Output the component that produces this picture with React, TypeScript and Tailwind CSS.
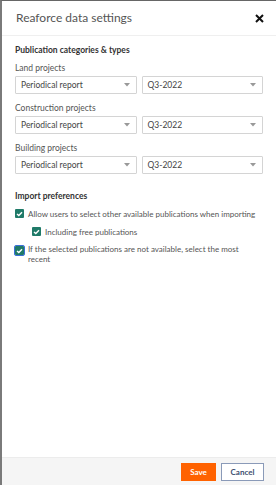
import React from "react";

const font = { fontFamily: "Lato, 'Noto Sans', sans-serif" };

function Select({ value }: { value: string }) {
  return (
    <div className="flex-1 h-[18px] border border-[#d4d4d4] rounded-[1px] flex items-center justify-between pl-[5px] pr-[6px] bg-white">
      <span className="text-[8.5px] text-[#444]">{value}</span>
      <svg width="6" height="4" viewBox="0 0 6 4"><path d="M0 0 L6 0 L3 3.5 Z" fill="#999" /></svg>
    </div>
  );
}

function Row({ label }: { label: string }) {
  return (
    <div className="flex flex-col">
      <div className="text-[8.5px] leading-[11px] text-[#555] mb-[2px]">{label}</div>
      <div className="flex gap-[5px]">
        <Select value="Periodical report" />
        <Select value="Q3-2022" />
      </div>
    </div>
  );
}

function Check({ focus }: { focus?: boolean }) {
  const box = (
    <div className="w-[9px] h-[9px] bg-[#1f7a68] rounded-[1px] flex items-center justify-center shrink-0">
      <svg width="7" height="6" viewBox="0 0 7 6"><path d="M1 3 L2.8 4.6 L6 1.2" stroke="white" strokeWidth="1.4" fill="none" /></svg>
    </div>
  );
  if (focus)
    return (
      <div className="w-[11px] h-[11px] rounded-[2px] border border-[#3b6fd8] bg-[#e8eefc] flex items-center justify-center shrink-0 -ml-[1px] mt-[1px]">
        {box}
      </div>
    );
  return box;
}

export default function App() {
  return (
    <div style={font} className="w-[276px] h-[485px] flex flex-col bg-white border-l-2 border-l-[#7a7a7a] border-t border-t-[#666] overflow-hidden">
      <div className="h-[35px] flex items-center justify-between pl-[14px] pr-[12px] border-b border-[#efefef] shrink-0">
        <span className="text-[12px] text-[#555]">Reaforce data settings</span>
        <svg width="9" height="9" viewBox="0 0 9 9"><path d="M1 1 L8 8 M8 1 L1 8" stroke="#111" strokeWidth="2" /></svg>
      </div>
      <div className="flex flex-col px-[13px] pt-[9px]">
        <div className="text-[8.5px] leading-[11px] font-bold text-[#333] mb-[7px]">Publication categories &amp; types</div>
        <div className="flex flex-col gap-[9px]">
          <Row label="Land projects" />
          <Row label="Construction projects" />
          <Row label="Building projects" />
        </div>
        <div className="text-[8.5px] leading-[11px] font-bold text-[#333] mt-[17px] mb-[6px]">Import preferences</div>
        <div className="flex items-center gap-[4px] h-[11px] mb-[7px]">
          <Check />
          <span className="text-[8px] text-[#555] whitespace-nowrap">Allow users to select other available publications when importing</span>
        </div>
        <div className="flex items-center gap-[4px] h-[11px] pl-[17px] mb-[7px]">
          <Check />
          <span className="text-[8px] text-[#555]">Including free publications</span>
        </div>
        <div className="flex items-start gap-[3px]">
          <Check focus />
          <span className="text-[8px] text-[#555] leading-[10px] max-w-[214px]">If the selected publications are not available, select the most recent</span>
        </div>
      </div>
      <div className="mt-auto h-[28px] bg-[#f5f5f5] border-t border-[#ececec] flex items-center justify-end gap-[5px] pr-[12px] shrink-0">
        <button className="w-[35px] h-[18px] bg-[#ff6200] text-white text-[8px] font-bold">Save</button>
        <button className="w-[43px] h-[18px] bg-white border border-[#8a9ab8] text-[#3d4e70] text-[8px] font-bold">Cancel</button>
      </div>
    </div>
  );
}
